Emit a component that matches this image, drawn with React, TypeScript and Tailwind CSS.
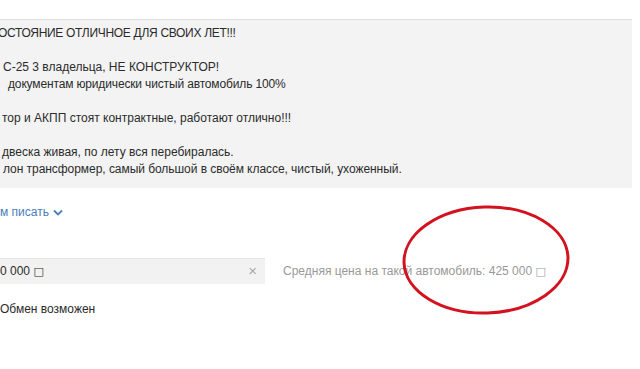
export default function App() {
  return (
    <div className="relative w-[640px] h-[369px] overflow-hidden bg-white text-[12px] text-[#2b2b2b] font-['Liberation_Sans',Arial,sans-serif]">
      <div className="pt-[19px]">
        {/* description */}
        <div className="w-[632px] h-[169px] border-t border-[#dedede] bg-[#f3f3f3] pt-[5px] leading-[17px]">
          <p className="-ml-[2px] tracking-[-0.3px]">ОСТОЯНИЕ ОТЛИЧНОЕ ДЛЯ СВОИХ ЛЕТ!!!</p>
          <p className="h-[17px]" />
          <p className="pl-[3px]">С-25 3 владельца, НЕ КОНСТРУКТОР!</p>
          <p className="pl-[8px] tracking-[-0.15px]">документам юридически чистый автомобиль 100%</p>
          <p className="h-[17px]" />
          <p className="pl-[2px]">тор и АКПП стоят контрактные, работают отлично!!!</p>
          <p className="h-[17px]" />
          <p className="pl-[2px]">двеска живая, по лету вся перебиралась.</p>
          <p className="pl-[3px] tracking-[-0.05px]">лон трансформер, самый большой в своём классе, чистый, ухоженный.</p>
        </div>

        <div className="mt-[16px] flex items-center gap-[4px] leading-[17px] text-[#4a7fba]">
          <span>м писать</span>
          <svg width="10" height="7" viewBox="0 0 10 7" fill="none">
            <path d="M1 1.5 L5 5.5 L9 1.5" stroke="#4a7fba" strokeWidth="1.8" />
          </svg>
        </div>

        {/* price row */}
        <div className="mt-[37px] flex items-center">
          <div className="w-[265px] h-[26px] flex items-center justify-between bg-[#f2f2f2] border-t border-[#e4e4e4] pr-[8px]">
            <span className="text-[12px] text-[#2b2b2b]">
              0 000 <span className="text-[11px] font-['DejaVu_Sans']">□</span>
            </span>
            <span className="text-[15px] text-[#aaa]">×</span>
          </div>
          <span className="ml-[18px] text-[#999]">
            Средняя цена на такой автомобиль: 425 000 <span className="text-[11px] font-['DejaVu_Sans']">□</span>
          </span>
        </div>

        <p className="mt-[17px] leading-[17px]">Обмен возможен</p>
      </div>

      {/* hand-drawn annotation */}
      <svg className="absolute left-0 top-0 pointer-events-none" width="640" height="369">
        <ellipse cx="486" cy="260" rx="82" ry="53" fill="none" stroke="#d2121e" strokeWidth="3" transform="rotate(-2 486 260)" />
      </svg>
    </div>
  );
}
